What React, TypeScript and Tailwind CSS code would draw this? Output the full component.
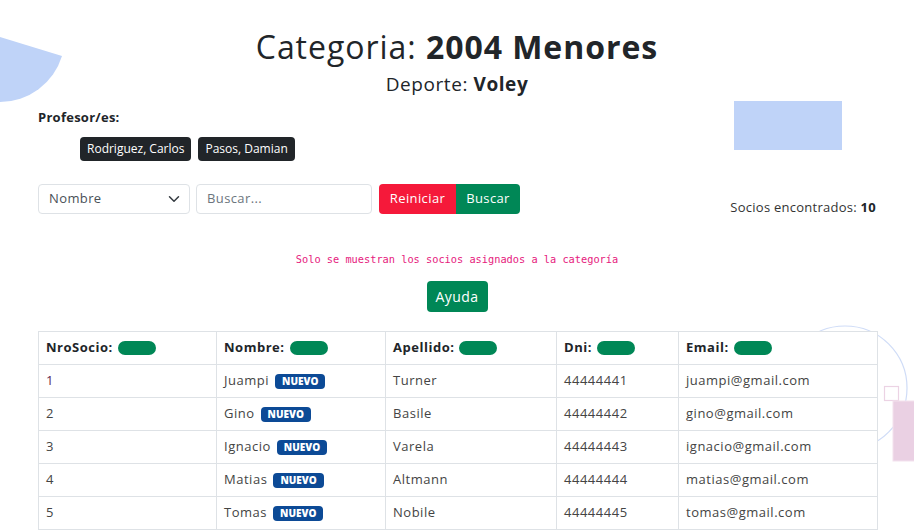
import React from 'react'

const socios = [
  { nro: '1', nombre: 'Juampi', apellido: 'Turner', dni: '44444441', email: 'juampi@gmail.com' },
  { nro: '2', nombre: 'Gino', apellido: 'Basile', dni: '44444442', email: 'gino@gmail.com' },
  { nro: '3', nombre: 'Ignacio', apellido: 'Varela', dni: '44444443', email: 'ignacio@gmail.com' },
  { nro: '4', nombre: 'Matias', apellido: 'Altmann', dni: '44444444', email: 'matias@gmail.com' },
  { nro: '5', nombre: 'Tomas', apellido: 'Nobile', dni: '44444445', email: 'tomas@gmail.com' },
]

const columns = [
  { label: 'NroSocio:', w: 'w-[178px]' },
  { label: 'Nombre:', w: 'w-[169px]' },
  { label: 'Apellido:', w: 'w-[171px]' },
  { label: 'Dni:', w: 'w-[122px]' },
  { label: 'Email:', w: 'w-[199px]' },
]

export default function App() {
  return (
    <div className="relative min-h-screen w-full overflow-hidden bg-white text-[#212529] font-['Open_Sans',sans-serif]">
      {/* Background shapes */}
      <svg className="absolute left-0 top-0" width="70" height="110" viewBox="0 0 70 110">
        <path d="M0 37 L62 56 A65 65 0 0 1 0 102 Z" fill="#bfd3f8" />
      </svg>
      <div className="absolute left-[734px] top-[101px] h-[49px] w-[108px] bg-[#bfd3f8]" />
      <svg className="absolute left-[770px] top-[320px]" width="144" height="160" viewBox="0 0 144 160">
        <circle cx="75" cy="68" r="62" fill="none" stroke="#cfdcf7" strokeWidth="1.2" />
        <rect x="114.5" y="66.5" width="14" height="14" fill="white" stroke="#ecd3e4" strokeWidth="1.2" />
        <rect x="123" y="81" width="30" height="60" fill="#ead0e3" stroke="#f3e2ee" />
      </svg>

      <div className="relative px-[38px] pt-[28px]">
        <h1 className="text-center text-[32px] leading-[38px] font-normal tracking-[0.03em]">
          Categoria: <span className="font-bold">2004 Menores</span>
        </h1>
        <h2 className="mt-[6px] text-center text-[19px] leading-[24px] tracking-[0.03em]">
          Deporte: <span className="font-bold">Voley</span>
        </h2>

        <div className="mt-[12px] text-[13px] font-bold leading-[18px] tracking-[0.02em]">Profesor/es:</div>
        <div className="mt-[11px] flex gap-[7px] pl-[42px]">
          <span className="rounded-[4px] bg-[#212529] px-[7px] text-[12px] leading-[24px] text-white">Rodriguez, Carlos</span>
          <span className="rounded-[4px] bg-[#212529] px-[7px] text-[12px] leading-[24px] text-white">Pasos, Damian</span>
        </div>

        <div className="mt-[23px] flex items-start">
          <div className="flex h-[30px] w-[152px] items-center justify-between rounded-[4px] border border-[#dee2e6] pl-[10px] pr-[9px] text-[13px] tracking-[0.03em] text-[#495057]">
            <span>Nombre</span>
            <svg width="12" height="12" viewBox="0 0 16 16" fill="none" stroke="#343a40" strokeWidth="2" strokeLinecap="round" strokeLinejoin="round">
              <path d="M2 5l6 6 6-6" />
            </svg>
          </div>
          <div className="ml-[6px] flex h-[30px] w-[176px] items-center rounded-[4px] border border-[#dee2e6] px-[10px] text-[13px] tracking-[0.03em] text-[#6c757d]">
            Buscar...
          </div>
          <div className="ml-[7px] flex h-[30px]">
            <button className="h-full w-[77px] rounded-l-[4px] bg-[#f5193a] text-[13px] tracking-[0.03em] text-white">Reiniciar</button>
            <button className="h-full w-[64px] rounded-r-[4px] bg-[#008756] text-[13px] tracking-[0.03em] text-white">Buscar</button>
          </div>
          <div className="ml-auto mt-[14px] text-[13px] leading-[18px] tracking-[0.02em] text-[#333]">
            Socios encontrados: <span className="font-bold text-[#212529]">10</span>
          </div>
        </div>

        <div className="mt-[36px] text-center font-['DejaVu_Sans_Mono',monospace] text-[10.3px] leading-[14px] text-[#e6197d]">
          Solo se muestran los socios asignados a la categoría
        </div>
        <div className="mt-[15px] flex justify-center">
          <button className="h-[31px] w-[61px] rounded-[4px] bg-[#008756] text-[14px] tracking-[0.03em] text-white">Ayuda</button>
        </div>

        <table className="mt-[19px] w-[839px] table-fixed border-collapse bg-white text-[13px] tracking-[0.04em]">
          <thead>
            <tr>
              {columns.map((c) => (
                <th key={c.label} className={`${c.w} h-[33px] border border-[#dee2e6] px-[7px] text-left font-bold`}>
                  <span className="flex items-center gap-[5px]">
                    {c.label}
                    <span className="inline-block h-[14px] w-[38px] rounded-full bg-[#008756]" />
                  </span>
                </th>
              ))}
            </tr>
          </thead>
          <tbody>
            {socios.map((s) => (
              <tr key={s.nro}>
                <td className={`h-[33px] border border-[#dee2e6] px-[7px] ${s.nro === '1' ? 'text-[#5c1f52]' : 'text-[#444]'}`}>{s.nro}</td>
                <td className="h-[33px] border border-[#dee2e6] px-[7px] text-[#444]">
                  <span className="flex items-center gap-[6px]">
                    {s.nombre}
                    <span className="rounded-[4px] bg-[#0c4a96] px-[7px] text-[10px] font-extrabold leading-[15px] tracking-normal text-white">NUEVO</span>
                  </span>
                </td>
                <td className="h-[33px] border border-[#dee2e6] px-[7px] text-[#444]">{s.apellido}</td>
                <td className="h-[33px] border border-[#dee2e6] px-[7px] text-[#444]">{s.dni}</td>
                <td className="h-[33px] border border-[#dee2e6] px-[7px] text-[#444]">{s.email}</td>
              </tr>
            ))}
          </tbody>
        </table>
      </div>
    </div>
  )
}
